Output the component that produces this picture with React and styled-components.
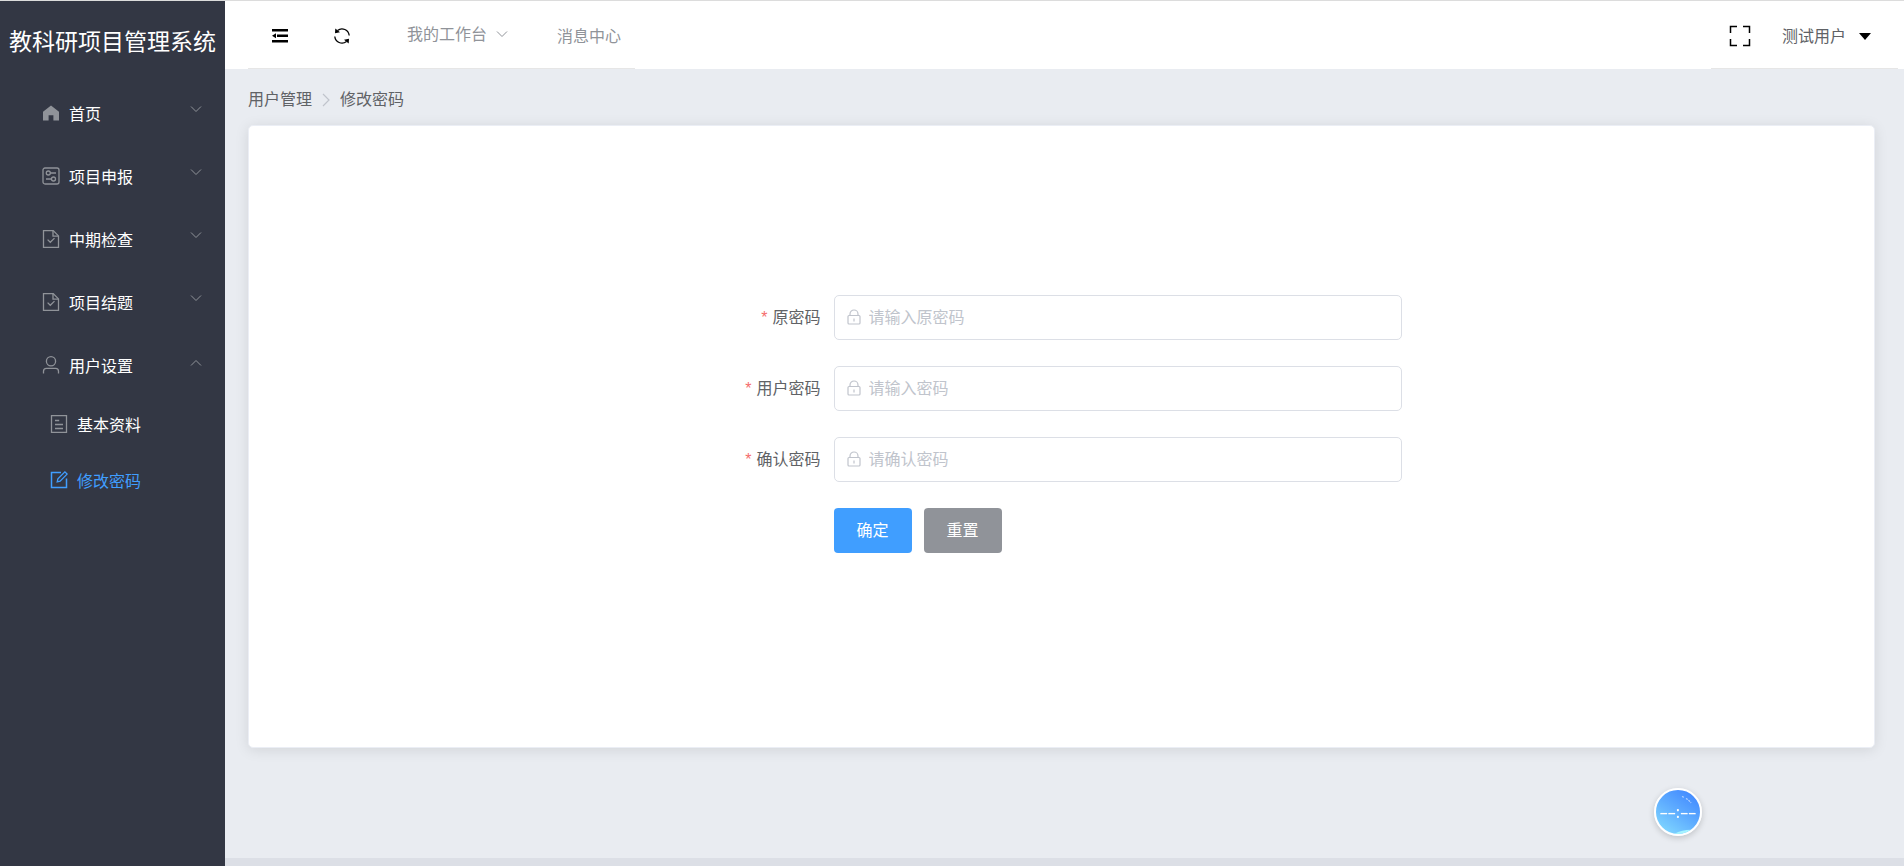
import React, { useState } from "react";
import styled, { createGlobalStyle } from "styled-components";

const GlobalStyle = createGlobalStyle`
  *, *::before, *::after { box-sizing: border-box; }
  body {
    margin: 0;
    background: #e9ecf1;
    color: #606266;
    font-family: "Liberation Sans", "Noto Sans CJK SC", sans-serif;
    font-size: 16px;
    line-height: 24px;
  }
  button, input { font: inherit; }
  button { cursor: pointer; }
  a { color: inherit; text-decoration: none; }
  svg { display: block; flex: none; }
`;

const Page = styled.div`
  display: flex;
  min-height: 100vh;
  border-top: 1px solid #dcdcdc;
`;

const Sidebar = styled.aside`
  flex: none;
  width: 225px;
  background: #333744;
  color: #fff;
`;

const SystemTitle = styled.h1`
  display: flex;
  align-items: center;
  justify-content: center;
  height: 80px;
  margin: 0;
  padding-top: 2px;
  font-size: 23px;
  font-weight: 400;
  line-height: 32px;
  white-space: nowrap;
`;

const Menu = styled.ul`
  margin: 0;
  padding: 0;
  list-style: none;
`;

const MenuHead = styled.button`
  display: flex;
  align-items: center;
  width: 100%;
  height: 63px;
  padding: 0 22px 0 37px;
  border: 0;
  background: none;
  color: #fff;
  text-align: left;
`;

const SubLink = styled.a`
  display: flex;
  align-items: center;
  height: 56px;
  padding: 0 22px 0 45px;
  color: ${(p) => (p.$active ? "#409eff" : "#fff")};
`;

const MenuIcon = styled.span`
  display: flex;
  justify-content: center;
  width: 27px;
  margin-right: 5px;
  color: ${(p) => (p.$active ? "#409eff" : "#909399")};
`;

const MenuText = styled.span`
  flex: 1;
  padding-top: 4px;
`;

const Arrow = styled.span`
  margin-bottom: 5px;
  color: #909399;
  transform: ${(p) => (p.$open ? "rotate(180deg)" : "none")};
`;

const Main = styled.div`
  display: flex;
  flex: 1;
  flex-direction: column;
  min-width: 0;
  border-bottom: 8px solid #dcdfe6;
`;

const Header = styled.header`
  display: flex;
  justify-content: space-between;
  height: 68px;
  padding: 0 6px 0 23px;
  background: #fff;
`;

const HeaderNav = styled.nav`
  display: flex;
  align-items: center;
  padding: ${(p) => (p.$end ? "2px 26px 0 18px" : "2px 14px 0 23px")};
  border-bottom: 1px solid #e6e6e6;
  color: #909399;
`;

const Tools = styled.div`
  display: flex;
  gap: 44px;
  margin-right: 56px;
`;

const IconButton = styled.button`
  display: flex;
  padding: 0;
  border: 0;
  background: none;
  color: #000;
`;

const DropButton = styled.button`
  display: flex;
  align-items: center;
  gap: 8px;
  margin-right: 48px;
  padding: 0 0 2px;
  border: 0;
  background: none;
  color: #909399;
`;

const NavLink = styled.a`
  padding-top: 2px;
`;

const UserButton = styled.button`
  display: flex;
  align-items: center;
  gap: 12px;
  margin-left: 31px;
  padding: 2px 0 0;
  border: 0;
  background: none;
  color: #606266;
`;

const Content = styled.main`
  display: flex;
  flex: 1;
  flex-direction: column;
  padding: 19px 29px 110px 23px;
`;

const Breadcrumb = styled.nav`
  display: flex;
  align-items: center;
  gap: 10px;
  height: 24px;
  margin-bottom: 13px;
`;

const Card = styled.section`
  flex: 1;
  padding: 169px 22px 22px;
  border: 1px solid #ebeef5;
  border-radius: 5px;
  background: #fff;
  box-shadow: 0 2px 14px rgba(0, 0, 0, 0.1);
`;

const Form = styled.form`
  display: flex;
  flex-direction: column;
  gap: 26px;
  max-width: 680px;
  margin: 0 auto;
`;

const FormRow = styled.div`
  display: flex;
  align-items: center;
`;

const Label = styled.label`
  flex: none;
  width: 112px;
  padding-right: 13px;
  text-align: right;
`;

const Required = styled.span`
  margin-right: 5px;
  color: #f56c6c;
`;

const InputBox = styled.div`
  display: flex;
  flex: 1;
  align-items: center;
  gap: 6px;
  height: 45px;
  padding: 0 16px 0 10px;
  border: 1px solid #dcdfe6;
  border-radius: 5px;
  color: #c0c4cc;
  &:focus-within { border-color: #409eff; }
`;

const Input = styled.input`
  flex: 1;
  min-width: 0;
  padding: 0;
  border: 0;
  outline: 0;
  background: none;
  color: #606266;
  &::placeholder { color: #c0c4cc; opacity: 1; }
`;

const Actions = styled.div`
  display: flex;
  gap: 12px;
  padding-left: 112px;
`;

const Button = styled.button`
  width: 78px;
  height: 45px;
  padding: 0;
  border: 0;
  border-radius: 4px;
  background: ${(p) => (p.$primary ? "#409eff" : "#909399")};
  color: #fff;
`;

const Ball = styled.button`
  position: fixed;
  right: 202px;
  bottom: 30px;
  display: flex;
  align-items: center;
  justify-content: center;
  width: 48px;
  height: 48px;
  padding: 0;
  overflow: hidden;
  border: 2px solid #fff;
  border-radius: 50%;
  background: linear-gradient(215deg, #4289ff 10%, #5fadff 50%, #7fd6ff 90%);
  box-shadow: 0 2px 6px rgba(0, 0, 0, 0.18);
  color: #fff;
  font-family: "Noto Sans", sans-serif;
  font-size: 16px;
  line-height: 20px;
`;

const Gloss = styled.svg`
  position: absolute;
  inset: 0;
`;

function Chevron() {
  return (
    <svg width="14" height="14" viewBox="0 0 14 14" fill="none" stroke="currentColor">
      <path d="M2 3.5l5 5 5-5" />
    </svg>
  );
}

const ICONS = {
  home: <path d="M9 1.6L1 7.8v8.700h5.600v-5.300h4.800v5.300H17V7.800z" fill="currentColor" stroke="none" />,
  setup: (
    <>
      <rect x="1" y="1" width="16" height="16" rx="2" />
      <circle cx="6.3" cy="6" r="2" />
      <path d="M8.300 6H14M4 12h5.500" />
      <circle cx="11.5" cy="12" r="2" />
    </>
  ),
  check: (
    <>
      <path d="M1.500 .6h9.700l5.300 5.300v11.500h-15z" />
      <path d="M11 .8v5.300h5.300M5.600 9.600l2.700 2.700 4.200-4.200" />
    </>
  ),
  user: (
    <>
      <circle cx="9" cy="5.3" r="4.6" />
      <path d="M1.500 17.600v-2.400c0-1.600 1.200-2.900 2.900-2.900h9.200c1.700 0 2.900 1.300 2.900 2.900v2.400" />
    </>
  ),
  doc: (
    <>
      <rect x="1.5" y=".6" width="15" height="16.8" />
      <path d="M5 5.500h4.200M5 9.500h8M5 13.500h8" />
    </>
  ),
  edit: (
    <>
      <path d="M11 1.500H1.500v15h15V7.500" strokeWidth="1.5" />
      <path d="M7.200 10.800l.7-2.900 7-7 2.200 2.200-7 7z" strokeWidth="1.3" />
    </>
  ),
};

function Icon({ name }) {
  return (
    <svg width="18" height="18" viewBox="0 0 18 18" fill="none" stroke="currentColor" strokeWidth="1.3">
      {ICONS[name]}
    </svg>
  );
}

const MENU = [
  { icon: "home", text: "首页" },
  { icon: "setup", text: "项目申报" },
  { icon: "check", text: "中期检查" },
  { icon: "check", text: "项目结题" },
  {
    icon: "user",
    text: "用户设置",
    children: [
      { icon: "doc", text: "基本资料" },
      { icon: "edit", text: "修改密码", active: true },
    ],
  },
];

const FIELDS = [
  { id: "old", label: "原密码", hint: "请输入原密码" },
  { id: "new", label: "用户密码", hint: "请输入密码" },
  { id: "confirm", label: "确认密码", hint: "请确认密码" },
];

function MenuGroup({ item }) {
  const [open, setOpen] = useState(Boolean(item.children));
  return (
    <li>
      <MenuHead type="button" aria-expanded={open} onClick={() => setOpen(!open)}>
        <MenuIcon><Icon name={item.icon} /></MenuIcon>
        <MenuText>{item.text}</MenuText>
        <Arrow $open={open}><Chevron /></Arrow>
      </MenuHead>
      {open && item.children && (
        <Menu>
          {item.children.map((c) => (
            <li key={c.text}>
              <SubLink href="#" $active={c.active}>
                <MenuIcon $active={c.active}><Icon name={c.icon} /></MenuIcon>
                <MenuText>{c.text}</MenuText>
              </SubLink>
            </li>
          ))}
        </Menu>
      )}
    </li>
  );
}

function Field({ field }) {
  return (
    <FormRow>
      <Label htmlFor={field.id}>
        <Required>*</Required>
        {field.label}
      </Label>
      <InputBox>
        <svg width="18" height="18" viewBox="0 0 18 18" fill="none" stroke="currentColor" strokeWidth="1.2">
          <rect x="3" y="6.5" width="12" height="8.5" rx="1" />
          <path d="M5 6.500V5a4 4 0 0 1 8 0v1.500M9 9.500v3" />
        </svg>
        <Input id={field.id} type="password" placeholder={field.hint} />
      </InputBox>
    </FormRow>
  );
}

export default function App() {
  return (
    <>
      <GlobalStyle />
      <Page>
        <Sidebar>
          <SystemTitle>教科研项目管理系统</SystemTitle>
          <Menu>
            {MENU.map((item) => <MenuGroup key={item.text} item={item} />)}
          </Menu>
        </Sidebar>
        <Main>
          <Header>
            <HeaderNav>
              <Tools>
                <IconButton type="button" aria-label="折叠菜单">
                  <svg width="18" height="18" viewBox="0 0 18 18" fill="currentColor">
                    <path d="M1 2h16v2.500H1zM6 7.500h11V10H6zM1 13h16v2.500H1zM1 8.700l4-2.500v5z" />
                  </svg>
                </IconButton>
                <IconButton type="button" aria-label="刷新">
                  <svg width="18" height="18" viewBox="0 0 18 18" fill="none" stroke="currentColor" strokeWidth="1.3">
                    <path d="M4.500 3.500A7.200 7.200 0 0 1 16.200 8.500M13.500 14.500A7.200 7.200 0 0 1 1.800 9.500" />
                    <path d="M2 6.300l.3-4.800L7 5.200zM16 11.700l-.3 4.800L11 12.800z" fill="currentColor" stroke="none" />
                  </svg>
                </IconButton>
              </Tools>
              <DropButton type="button">
                我的工作台
                <Chevron />
              </DropButton>
              <NavLink href="#">消息中心</NavLink>
            </HeaderNav>
            <HeaderNav $end>
              <IconButton type="button" aria-label="全屏">
                <svg width="22" height="22" viewBox="0 0 22 22" fill="none" stroke="currentColor" strokeWidth="1.500">
                  <path d="M1.500 8V1.500H8M14 1.500h6.500V8M20.500 14v6.500H14M8 20.500H1.500V14" />
                </svg>
              </IconButton>
              <UserButton type="button">
                测试用户
                <svg width="14" height="14" viewBox="0 0 14 14" fill="#000">
                  <path d="M1 3h12l-6 7z" />
                </svg>
              </UserButton>
            </HeaderNav>
          </Header>
          <Content>
            <Breadcrumb aria-label="当前位置">
              <span>用户管理</span>
              <svg width="8" height="14" viewBox="0 0 8 14" fill="none" stroke="#c0c4cc" strokeWidth="1.200">
                <path d="M1 1l6 6-6 6" />
              </svg>
              <span>修改密码</span>
            </Breadcrumb>
            <Card>
              <Form onSubmit={(e) => e.preventDefault()}>
                {FIELDS.map((f) => <Field key={f.id} field={f} />)}
                <Actions>
                  <Button $primary type="submit">确定</Button>
                  <Button type="reset">重置</Button>
                </Actions>
              </Form>
            </Card>
          </Content>
        </Main>
      </Page>
      <Ball type="button">
        <Gloss width="44" height="44" viewBox="0 0 44 44" fill="none">
          <path d="M18 44q10-5 20-4l-4 4z" fill="#a5f3ff" />
          <path d="M26 6.500l2 .8M30 8.500q3 1.500 5 4.500" stroke="#fff" strokeOpacity=".6" strokeWidth="1.200" strokeDasharray="2 1" />
        </Gloss>
        ––:––
      </Ball>
    </>
  );
}
